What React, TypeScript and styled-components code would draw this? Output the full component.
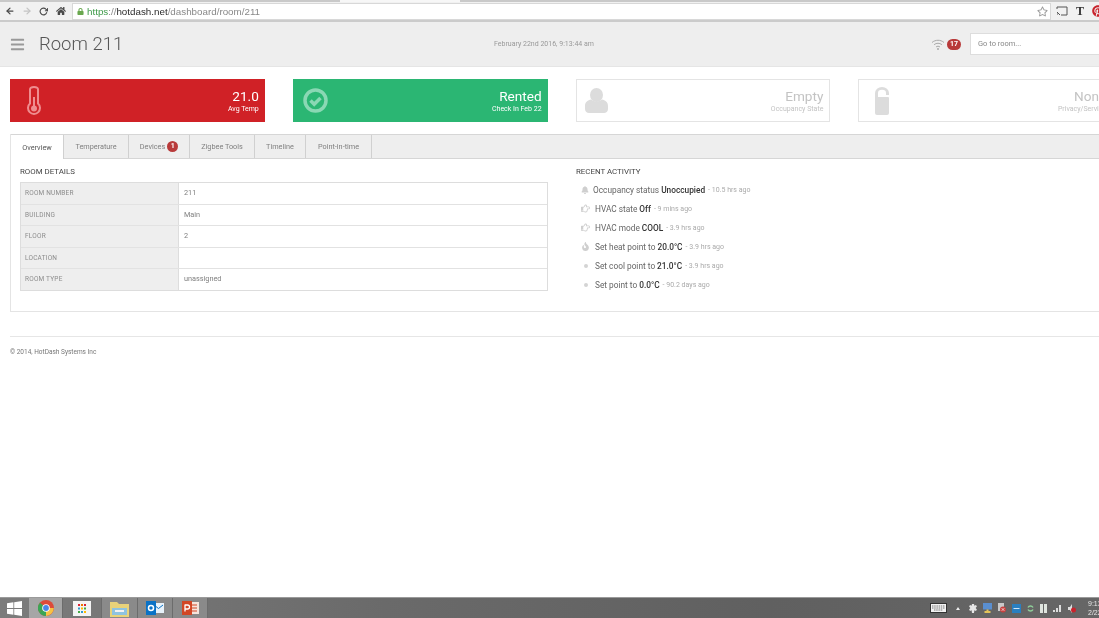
import React from 'react';
import styled, { createGlobalStyle } from 'styled-components';
import { FaBars, FaHome, FaLock, FaRegStar, FaBell, FaFire, FaRegHandPointRight, FaPinterest } from 'react-icons/fa';
import { FiArrowLeft, FiArrowRight, FiRotateCw } from 'react-icons/fi';

const GlobalStyle = createGlobalStyle`
  html, body { margin: 0; padding: 0; background: #fff; }
  body { font-family: Roboto, "Liberation Sans", sans-serif; overflow: hidden; }
`;

const Screen = styled.div`
  width: 1099px;
  height: 618px;
  display: flex;
  flex-direction: column;
  overflow: hidden;
  color: #555;
  /* the reference is a soft, rescaled capture */
  filter: blur(0.45px);
  will-change: transform;
`;

/* browser chrome */
const TabStrip = styled.div`
  height: 2px;
  flex: none;
  display: flex;
`;

const TabEdge = styled.span<{ $w?: number; $open?: boolean }>`
  flex: ${p => (p.$w ? `0 0 ${p.$w}px` : '1')};
  background: ${p => (p.$open ? '#f7f7f7' : '#c9c9c9')};
`;

const BrowserBar = styled.div`
  height: 20px;
  flex: none;
  display: flex;
  align-items: center;
  box-sizing: border-box;
  padding-left: 1px;
  background: #f1f1f1;
  border-bottom: 2px solid #cbcbcb;
`;

const NavIcon = styled.span<{ $muted?: boolean }>`
  width: 17px;
  height: 16px;
  flex: none;
  display: flex;
  align-items: center;
  justify-content: center;
  font-size: 10px;
  color: ${p => (p.$muted ? '#c4c4c4' : '#4a4a4a')};
`;

const Omnibox = styled.div`
  flex: 1;
  height: 15px;
  margin-left: 3px;
  display: flex;
  align-items: center;
  gap: 3px;
  padding: 0 2px 0 4px;
  background: #fff;
  border: 1px solid #d8d8d8;
  font-family: "Liberation Sans", sans-serif;
  font-size: 9.8px;
  color: #888;
`;

const Secure = styled.span`
  color: #3d9a48;
`;

const Host = styled.span`
  color: #2a2a2a;
`;

const UrlText = styled.span`
  flex: 1;
  white-space: nowrap;
`;

const Extensions = styled.div`
  flex: none;
  display: flex;
  align-items: center;
  gap: 8px;
  margin: 0 -5px 0 5px;
`;

const SerifT = styled.span`
  font-family: "Liberation Serif", serif;
  font-weight: 700;
  font-size: 12px;
  color: #333;
`;

/* app header */
const Header = styled.header`
  height: 45px;
  flex: none;
  display: flex;
  align-items: center;
  padding-left: 10px;
  background: #eee;
  border-bottom: 1px solid #e5e5e5;
  box-sizing: border-box;
`;

const Burger = styled.span`
  flex: none;
  display: flex;
  font-size: 15px;
  color: #999;
  width: 29px;
`;

const Title = styled.h1`
  margin: 0;
  flex: none;
  width: 455px;
  font-size: 18.5px;
  font-weight: 300;
  color: #555;
`;

const DateText = styled.div`
  flex: none;
  width: 437px;
  font-size: 7px;
  color: #999;
`;

const Signal = styled.span`
  flex: none;
  display: flex;
  margin-right: 2px;
`;

const CountBadge = styled.span`
  flex: none;
  height: 11px;
  width: 14px;
  margin-right: 9px;
  border-radius: 6px;
  background: #b83a3a;
  color: #fff;
  font-size: 7px;
  font-weight: 700;
  line-height: 11px;
  text-align: center;
`;

const RoomSearch = styled.div`
  flex: none;
  width: 140px;
  height: 22px;
  padding-left: 7px;
  box-sizing: border-box;
  background: #fff;
  border: 1px solid #ddd;
  font-size: 7.5px;
  line-height: 20px;
  color: #888;
`;

/* status cards */
const Cards = styled.div`
  flex: none;
  display: flex;
  gap: 28px;
  padding: 12px 0 12px 10px;
  width: 1140px;
`;

const Card = styled.div<{ $bg?: string }>`
  width: 254.8px;
  height: 43px;
  flex: none;
  display: flex;
  align-items: center;
  justify-content: space-between;
  padding: 0 6px 0 0;
  box-sizing: border-box;
  background: ${p => p.$bg || '#fff'};
  border: ${p => (p.$bg ? 'none' : '1px solid #e4e4e4')};
  color: ${p => (p.$bg ? '#fff' : '#c3c3c3')};
`;

const CardIcon = styled.span<{ $color: string; $left: number }>`
  display: flex;
  margin-left: ${p => p.$left}px;
  color: ${p => p.$color};
`;

const CardText = styled.div`
  text-align: right;
`;

const CardValue = styled.div`
  font-size: 13.6px;
  font-weight: 400;
  line-height: 16px;
`;

const CardLabel = styled.div`
  font-size: 7px;
  line-height: 10px;
  white-space: nowrap;
`;

/* tab panel */
const Panel = styled.section`
  flex: none;
  width: 1110px;
  margin-left: 10px;
  height: 178px;
  box-sizing: border-box;
  border: 1px solid #e4e4e4;
  border-top: none;
`;

const TabBar = styled.nav`
  height: 25px;
  box-sizing: border-box;
  display: flex;
  background: #eee;
  border-top: 1px solid #d6d6d6;
  border-bottom: 1px solid #d6d6d6;
`;

const Tab = styled.div<{ $active?: boolean; $w: number }>`
  width: ${p => p.$w}px;
  height: ${p => (p.$active ? '24px' : '23px')};
  display: flex;
  align-items: center;
  justify-content: center;
  gap: 2px;
  box-sizing: border-box;
  background: ${p => (p.$active ? '#fff' : 'transparent')};
  border-right: 1px solid #d0d0d0;
  font-size: 7.3px;
  color: ${p => (p.$active ? '#555' : '#808080')};
`;

const TabBadge = styled.span`
  width: 11px;
  height: 11px;
  border-radius: 50%;
  background: #b83a3a;
  color: #fff;
  font-size: 7px;
  font-weight: 700;
  line-height: 11px;
  text-align: center;
`;

const PanelBody = styled.div`
  display: flex;
  padding: 8px 0 0 9px;
`;

const LeftColumn = styled.div`
  width: 528px;
  flex: none;
  margin-right: 28px;
`;

const SectionTitle = styled.h3<{ $gap: number }>`
  margin: 0 0 ${p => p.$gap}px;
  height: 10px;
  font-size: 7.9px;
  line-height: 10px;
  font-weight: 400;
  color: #444;
`;

const DetailTable = styled.div`
  box-sizing: border-box;
  height: 109px;
  display: flex;
  flex-direction: column;
  border: 1px solid #ddd;
`;

const DetailRow = styled.div`
  display: flex;
  flex: 1;
  box-sizing: border-box;
  border-bottom: 1px solid #e2e2e2;
  &:last-child { border-bottom: none; }
`;

const DetailLabel = styled.div`
  width: 158px;
  flex: none;
  padding-left: 4px;
  box-sizing: border-box;
  background: #eee;
  border-right: 1px solid #ddd;
  font-size: 6.5px;
  line-height: 20px;
  letter-spacing: 0.2px;
  color: #8c8c8c;
`;

const DetailValue = styled.div`
  padding-left: 5px;
  font-size: 7.3px;
  line-height: 20px;
  color: #808080;
`;

const ActivityList = styled.ul`
  margin: 0;
  padding: 0 0 0 5px;
  list-style: none;
`;

const ActivityItem = styled.li`
  height: 19px;
  display: flex;
  align-items: center;
  font-size: 8.3px;
  color: #666;
  white-space: nowrap;
`;

const ActivityIcon = styled.span<{ $w: number }>`
  width: ${p => p.$w}px;
  flex: none;
  display: flex;
  font-size: 8px;
  color: #cfcfcf;
`;

const Dot = styled.span`
  width: 4px;
  height: 4px;
  margin-left: 3px;
  border-radius: 50%;
  background: #d4d4d4;
`;

const Strong = styled.b`
  font-weight: 500;
  margin-left: 2px;
  color: #333;
`;

const Ago = styled.span`
  margin-left: 3px;
  font-size: 7px;
  color: #aaa;
`;

/* footer */
const Footer = styled.footer`
  flex: none;
  margin: 24px 0 0 10px;
  height: 20px;
  border-top: 1px solid #e6e6e6;
  font-size: 6.5px;
  line-height: 30px;
  color: #777;
`;

/* windows taskbar */
const Taskbar = styled.div`
  margin-top: auto;
  height: 21px;
  flex: none;
  display: flex;
  align-items: center;
  background: linear-gradient(90deg, #7c7c7c, #6a6a6a 35%, #606060 70%, #666);
  border-top: 1px solid #9a9a9a;
  box-sizing: border-box;
`;

const Slot = styled.span<{ $active?: boolean; $plain?: boolean; $w: number }>`
  width: ${p => p.$w}px;
  height: 20px;
  flex: none;
  display: flex;
  align-items: center;
  justify-content: center;
  background: ${p => (p.$active ? '#a6a6a6' : p.$plain ? 'transparent' : '#8a8a8a')};
  border-right: 1px solid #6c6c6c;
  box-sizing: border-box;
`;

const TaskbarStart = styled.span`
  width: 29px;
  flex: none;
  display: flex;
  justify-content: center;
`;

const Tray = styled.div`
  margin-left: auto;
  display: flex;
  align-items: center;
  gap: 6px;
`;

const Caret = styled.span`
  margin: 0 3px;
  width: 0;
  height: 0;
  border-left: 2px solid transparent;
  border-right: 2px solid transparent;
  border-bottom: 3px solid #eee;
`;

const Clock = styled.div`
  width: 11px;
  margin-left: 6px;
  overflow: hidden;
  font-family: "Liberation Sans", sans-serif;
  font-size: 7px;
  line-height: 9px;
  color: #e8e8e8;
  white-space: nowrap;
`;

const tabs: [string, number][] = [
  ['Temperature', 65],
  ['Devices', 61],
  ['Zigbee Tools', 65],
  ['Timeline', 51],
  ['Point-in-time', 66],
];

const details = [
  ['ROOM NUMBER', '211'],
  ['BUILDING', 'Main'],
  ['FLOOR', '2'],
  ['LOCATION', ''],
  ['ROOM TYPE', 'unassigned'],
];

const App = () => (
  <Screen>
    <GlobalStyle />
    <TabStrip>
      <TabEdge $w={340} />
      <TabEdge $w={120} $open />
      <TabEdge />
    </TabStrip>
    <BrowserBar>
      <NavIcon><FiArrowLeft strokeWidth={3} /></NavIcon>
      <NavIcon $muted><FiArrowRight strokeWidth={3} /></NavIcon>
      <NavIcon><FiRotateCw strokeWidth={3} size={9} /></NavIcon>
      <NavIcon><FaHome size={10} /></NavIcon>
      <Omnibox>
        <FaLock size={7} color="#6aa84f" />
        <UrlText>
          <Secure>https</Secure>://<Host>hotdash.net</Host>/dashboard/room/211
        </UrlText>
        <FaRegStar size={11} color="#999" />
      </Omnibox>
      <Extensions>
        <svg width="12" height="10" viewBox="0 0 12 10" fill="none" stroke="#555">
          <path d="M1 3V1h10v8H5" />
          <path d="M1 6l3 3M1 8h1" />
        </svg>
        <SerifT>T</SerifT>
        <FaPinterest color="#c8232c" size={12} />
      </Extensions>
    </BrowserBar>

    <Header>
      <Burger><FaBars /></Burger>
      <Title>Room 211</Title>
      <DateText>February 22nd 2016, 9:13:44 am</DateText>
      <Signal>
        <svg width="14" height="13" viewBox="0 0 14 13" fill="none" stroke="#aaa" strokeWidth="1">
          <path d="M1 4.500c3.400-3 8.600-3 12 0" />
          <path d="M3 6.800c2.300-2 5.700-2 8 0" />
          <path d="M5 9c1.200-1 2.800-1 4 0" />
          <circle cx="7" cy="11" r="1" fill="#aaa" stroke="none" />
        </svg>
      </Signal>
      <CountBadge>17</CountBadge>
      <RoomSearch>Go to room...</RoomSearch>
    </Header>

    <Cards>
      <Card $bg="#d02126">
        <CardIcon $color="#ef8d8f" $left={17}>
          <svg width="14" height="29" viewBox="0 0 14 29" fill="none" stroke="currentColor" strokeWidth="2">
            <path d="M3 3.500a4 2.500 0 0 1 8 0v14a6 6 0 1 1-8 0z" />
            <circle cx="7" cy="22.500" r="3" fill="currentColor" stroke="none" />
            <path d="M7 11v10" />
          </svg>
        </CardIcon>
        <CardText>
          <CardValue>21.0</CardValue>
          <CardLabel>Avg Temp</CardLabel>
        </CardText>
      </Card>
      <Card $bg="#2bb673">
        <CardIcon $color="#8ad8b4" $left={10}>
          <svg width="25" height="25" viewBox="0 0 25 25" fill="none" stroke="currentColor">
            <circle cx="12.500" cy="12.500" r="10.500" strokeWidth="3.500" />
            <path d="M7.500 12.500l3.700 3.700 6.300-6.300" strokeWidth="3.500" />
          </svg>
        </CardIcon>
        <CardText>
          <CardValue>Rented</CardValue>
          <CardLabel>Check In Feb 22</CardLabel>
        </CardText>
      </Card>
      <Card>
        <CardIcon $color="#dcdcdc" $left={8}>
          <svg width="23" height="25" viewBox="0 0 23 25" fill="currentColor">
            <ellipse cx="11.500" cy="7" rx="6.500" ry="7" />
            <path d="M0 18c0-4 3-6 6-6.500 3 2.500 8 2.500 11 0 3 .5 6 2.500 6 6.500v3c0 2.500-2 4-4 4H4c-2 0-4-1.500-4-4z" />
          </svg>
        </CardIcon>
        <CardText>
          <CardValue>Empty</CardValue>
          <CardLabel>Occupancy State</CardLabel>
        </CardText>
      </Card>
      <Card>
        <CardIcon $color="#dcdcdc" $left={16}>
          <svg width="14" height="28" viewBox="0 0 14 28" fill="currentColor">
            <path d="M0 11V6a7 6 0 0 1 14 0v2h-3V6a4 3.200 0 0 0-8 0v4h10a1 1 0 0 1 1 1v15a2 2 0 0 1-2 2H2a2 2 0 0 1-2-2z" />
          </svg>
        </CardIcon>
        <CardText>
          <CardValue>None</CardValue>
          <CardLabel>Privacy/Service</CardLabel>
        </CardText>
      </Card>
    </Cards>

    <Panel>
      <TabBar>
        <Tab $active $w={53}>Overview</Tab>
        {tabs.map(([name, w]) => (
          <Tab key={name} $w={w}>
            {name}
            {name === 'Devices' && <TabBadge>1</TabBadge>}
          </Tab>
        ))}
      </TabBar>
      <PanelBody>
        <LeftColumn>
          <SectionTitle $gap={5}>ROOM DETAILS</SectionTitle>
          <DetailTable>
            {details.map(([label, value]) => (
              <DetailRow key={label}>
                <DetailLabel>{label}</DetailLabel>
                <DetailValue>{value}</DetailValue>
              </DetailRow>
            ))}
          </DetailTable>
        </LeftColumn>
        <div>
          <SectionTitle $gap={3}>RECENT ACTIVITY</SectionTitle>
          <ActivityList>
            <ActivityItem>
              <ActivityIcon $w={12}><FaBell /></ActivityIcon>
              Occupancy status<Strong>Unoccupied</Strong><Ago>- 10.5 hrs ago</Ago>
            </ActivityItem>
            <ActivityItem>
              <ActivityIcon $w={14}><FaRegHandPointRight size={9} /></ActivityIcon>
              HVAC state<Strong>Off</Strong><Ago>- 9 mins ago</Ago>
            </ActivityItem>
            <ActivityItem>
              <ActivityIcon $w={14}><FaRegHandPointRight size={9} /></ActivityIcon>
              HVAC mode<Strong>COOL</Strong><Ago>- 3.9 hrs ago</Ago>
            </ActivityItem>
            <ActivityItem>
              <ActivityIcon $w={14}><FaFire size={9} /></ActivityIcon>
              Set heat point to<Strong>20.0°C</Strong><Ago>- 3.9 hrs ago</Ago>
            </ActivityItem>
            <ActivityItem>
              <ActivityIcon $w={14}><Dot /></ActivityIcon>
              Set cool point to<Strong>21.0°C</Strong><Ago>- 3.9 hrs ago</Ago>
            </ActivityItem>
            <ActivityItem>
              <ActivityIcon $w={14}><Dot /></ActivityIcon>
              Set point to<Strong>0.0°C</Strong><Ago>- 90.2 days ago</Ago>
            </ActivityItem>
          </ActivityList>
        </div>
      </PanelBody>
    </Panel>

    <Footer>© 2014, HotDash Systems Inc</Footer>

    <Taskbar>
      <TaskbarStart>
        <svg width="15" height="15" viewBox="0 0 15 15" fill="#fff">
          <path d="M0 2.200l6.400-.9v5.800H0zM7.200 1.200L15 0v7.100H7.200zM0 7.900h6.400v5.800L0 12.800zM7.200 7.900H15V15l-7.800-1.200z" />
        </svg>
      </TaskbarStart>
      <Slot $active $w={34}>
        <svg width="16" height="16" viewBox="0 0 16 16">
          <circle cx="8" cy="8" r="8" fill="#dd4b39" />
          <path d="M8 8L1.200 12.200A8 8 0 0 0 8 16z" fill="#3aa655" />
          <path d="M8 8l-6.800 4.200A8 8 0 0 1 2 2.700z" fill="#3aa655" />
          <path d="M8 8h7.800A8 8 0 0 1 8 16z" fill="#f6c344" />
          <circle cx="8" cy="8" r="3.800" fill="#fff" />
          <circle cx="8" cy="8" r="2.900" fill="#4a86e8" />
        </svg>
      </Slot>
      <Slot $plain $w={39}>
        <svg width="18" height="15" viewBox="0 0 18 15">
          <rect width="18" height="15" fill="#f4f4f4" />
          <path d="M5 3h2v2H5z" fill="#d23" /><path d="M8 3h2v2H8z" fill="#e70" /><path d="M11 3h2v2h-2z" fill="#d23" />
          <path d="M5 6.500h2v2H5z" fill="#39c" /><path d="M8 6.500h2v2H8z" fill="#fb0" /><path d="M11 6.500h2v2h-2z" fill="#4a4" />
          <path d="M5 10h2v2H5z" fill="#4a4" /><path d="M8 10h2v2H8z" fill="#39c" /><path d="M11 10h2v2h-2z" fill="#fb0" />
        </svg>
      </Slot>
      <Slot $w={36}>
        <svg width="19" height="17" viewBox="0 0 19 17">
          <path d="M0 2h7l2 2h10v13H0z" fill="#e8d27a" />
          <path d="M2 8h15v7H2z" fill="#8fc3e0" />
          <path d="M5 10h9v2H5z" fill="#f2f2f2" />
        </svg>
      </Slot>
      <Slot $w={35}>
        <svg width="18" height="14" viewBox="0 0 18 14">
          <rect x="7" y="2" width="11" height="10" fill="#e8f2fa" />
          <path d="M8 4l4.500 3.500L17 4" fill="none" stroke="#0a72c6" />
          <rect width="10" height="14" fill="#0a72c6" />
          <circle cx="5" cy="7" r="2.500" fill="none" stroke="#fff" strokeWidth="1.500" />
        </svg>
      </Slot>
      <Slot $w={35}>
        <svg width="17" height="14" viewBox="0 0 17 14">
          <rect x="7" y="1" width="10" height="12" fill="#f5e4dc" />
          <path d="M10 4h5M10 7h5M10 10h5" stroke="#d24726" />
          <rect width="10" height="14" fill="#d24726" />
          <path d="M3 3.500v7M3 4h2.500a1.800 1.800 0 0 1 0 4H3" stroke="#fff" strokeWidth="1.300" fill="none" />
        </svg>
      </Slot>
      <Tray>
        <svg width="17" height="10" viewBox="0 0 17 10">
          <rect x="0.500" y="0.500" width="16" height="9" fill="#f2f2f2" stroke="#333" />
          <path d="M2 3h13M2 5h13M4 7h9" stroke="#777" strokeDasharray="1.500 .7" />
        </svg>
        <Caret />
        <svg width="8" height="9" viewBox="0 0 8 9" fill="#e6e6e6">
          <path d="M3 0h2l.4 1.700 1.600-.7.900 1.500-1.300 1.500 1.300 1.500L7 7l-1.600-.7L5 9H3l-.4-2.700L1 7 .1 5.500l1.300-1.500L.1 2.500 1 1l1.600.7z" />
        </svg>
        <svg width="9" height="10" viewBox="0 0 9 10">
          <rect width="9" height="6.500" fill="#5a8fd0" />
          <path d="M3.500 6.500h2V8h2v2h-6V8h2z" fill="#e3c35a" />
        </svg>
        <svg width="8" height="10" viewBox="0 0 8 10">
          <rect width="6" height="8" fill="#c9c9c9" />
          <circle cx="5" cy="6.500" r="3" fill="#c8413f" />
          <path d="M3.700 5.200l2.600 2.600M6.300 5.200L3.700 7.800" stroke="#fff" strokeWidth="0.700" />
        </svg>
        <svg width="9" height="9" viewBox="0 0 9 9">
          <rect width="9" height="9" fill="#2a7fc0" />
          <path d="M1.500 4.500h6" stroke="#cfe4f5" />
        </svg>
        <svg width="7" height="9" viewBox="0 0 7 9" fill="none" stroke="#8fcf9a" strokeWidth="1.500">
          <path d="M1 3.500a2.800 2.800 0 0 1 5 0M6 5.500a2.800 2.800 0 0 1-5 0" />
        </svg>
        <svg width="7" height="9" viewBox="0 0 7 9" fill="#dfe5df">
          <rect width="3" height="9" />
          <rect x="4" width="3" height="9" />
        </svg>
        <svg width="9" height="8" viewBox="0 0 9 8" fill="#ddd"><path d="M0 6h2v2H0zM3 4h2v4H3zM6 1h2v7H6z" /></svg>
        <svg width="8" height="9" viewBox="0 0 8 9"><path d="M0 3h2l2-3v9L2 6H0z" fill="#ddd" /><circle cx="5.500" cy="6" r="2.500" fill="#c8232c" /></svg>
        <Clock>9:13<br />2/22</Clock>
      </Tray>
    </Taskbar>
  </Screen>
);

export default App;
